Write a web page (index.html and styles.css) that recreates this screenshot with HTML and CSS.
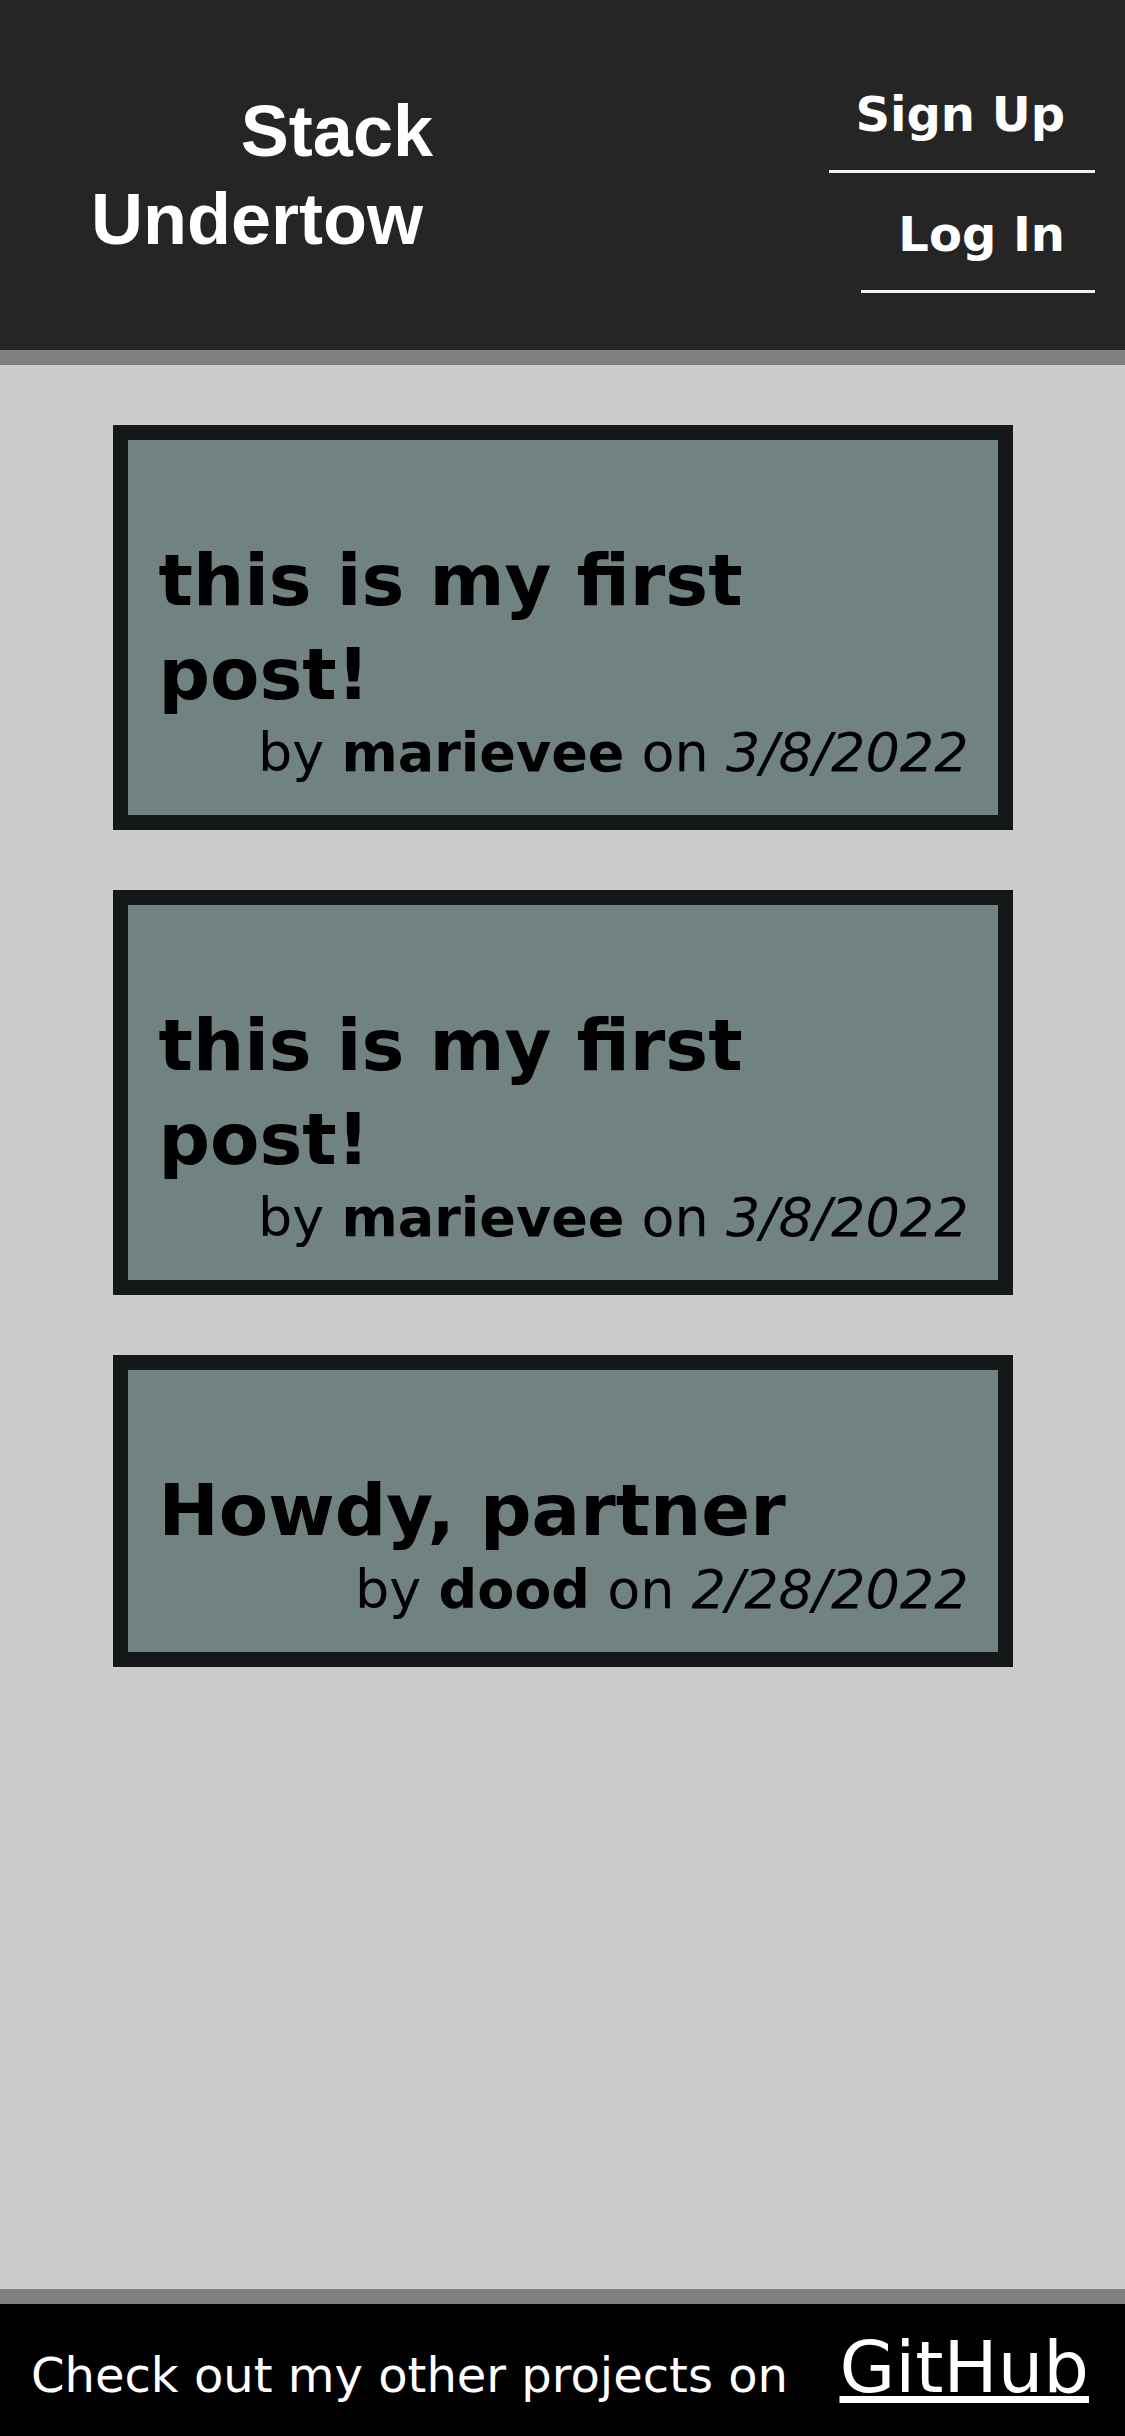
FILE: index.html
```html
<!DOCTYPE html>
<html lang="en">
<head>
<meta charset="utf-8">
<title>Stack Undertow</title>
<link rel="stylesheet" href="styles.css">
</head>
<body>
<header class="site-header">
  <h1 class="brand">
    <span class="brand-line">Stack</span>
    <span class="brand-line brand-line-2">Undertow</span>
  </h1>
  <nav class="nav">
    <a class="nav-link nav-link-signup" href="#">Sign Up</a>
    <a class="nav-link nav-link-login" href="#">Log In</a>
  </nav>
</header>
<main class="posts">
  <article class="post">
    <h2 class="post-title">this is my first post!</h2>
    <p class="byline">by <strong>marievee</strong> on <em>3/8/2022</em></p>
  </article>
  <article class="post">
    <h2 class="post-title">this is my first post!</h2>
    <p class="byline">by <strong>marievee</strong> on <em>3/8/2022</em></p>
  </article>
  <article class="post">
    <h2 class="post-title">Howdy, partner</h2>
    <p class="byline">by <strong>dood</strong> on <em>2/28/2022</em></p>
  </article>
</main>
<footer class="site-footer">
  <span class="footer-text">Check out my other projects on</span>
  <a class="footer-link" href="#">GitHub</a>
</footer>
</body>
</html>
```
FILE: styles.css
```css
html, body {
  margin: 0;
  padding: 0;
}
body {
  min-height: 100vh;
  display: flex;
  flex-direction: column;
  background: #cccccc;
  font-family: "DejaVu Sans", Verdana, sans-serif;
}
.site-header {
  height: 350px;
  background: #252525;
  border-bottom: 15px solid #808080;
  display: flex;
  justify-content: space-between;
  align-items: center;
  padding: 0 30px 0 91px;
}
.brand {
  margin: 0;
  display: flex;
  flex-direction: column;
  align-items: flex-end;
  font-family: "Liberation Sans", Arial, sans-serif;
  font-weight: 700;
  font-size: 72px;
  line-height: 88px;
  color: #ffffff;
}
.brand-line-2 {
  margin-right: 10px;
}
.nav {
  display: flex;
  flex-direction: column;
  align-items: flex-end;
  gap: 5px;
}
.nav-link {
  display: block;
  font-family: "DejaVu Sans", Verdana, sans-serif;
  font-weight: 700;
  font-size: 48px;
  line-height: 56px;
  color: #ffffff;
  text-decoration: none;
  padding: 28px 30px 28px 29px;
  border-bottom: 3px solid #f2f2f2;
}
.nav-link-signup {
  padding-left: 26px;
}
.nav-link-login {
  padding-left: 37px;
}
.posts {
  flex: 1;
  display: flex;
  flex-direction: column;
  align-items: center;
  gap: 60px;
  padding: 60px 0;
}
.post {
  box-sizing: border-box;
  width: 80%;
  background: #708281;
  border: 15px solid #141819;
  padding: 31px 29px 31px 31px;
}
.post-title {
  margin: 63px 0 0;
  font-size: 72px;
  line-height: 93.6px;
  font-weight: 700;
  color: #000000;
}
.byline {
  margin: 0;
  text-align: right;
  font-size: 54px;
  line-height: 63px;
  color: #000000;
}
.byline strong {
  font-weight: 700;
}
.site-footer {
  box-sizing: border-box;
  height: 147px;
  background: #000000;
  border-top: 15px solid #808080;
  display: flex;
  justify-content: space-between;
  align-items: baseline;
  padding: 21px 36px 0 31px;
  color: #ffffff;
}
.footer-text {
  font-size: 48px;
}
.footer-link {
  font-size: 72px;
  color: #ffffff;
  text-decoration: underline;
}
```
